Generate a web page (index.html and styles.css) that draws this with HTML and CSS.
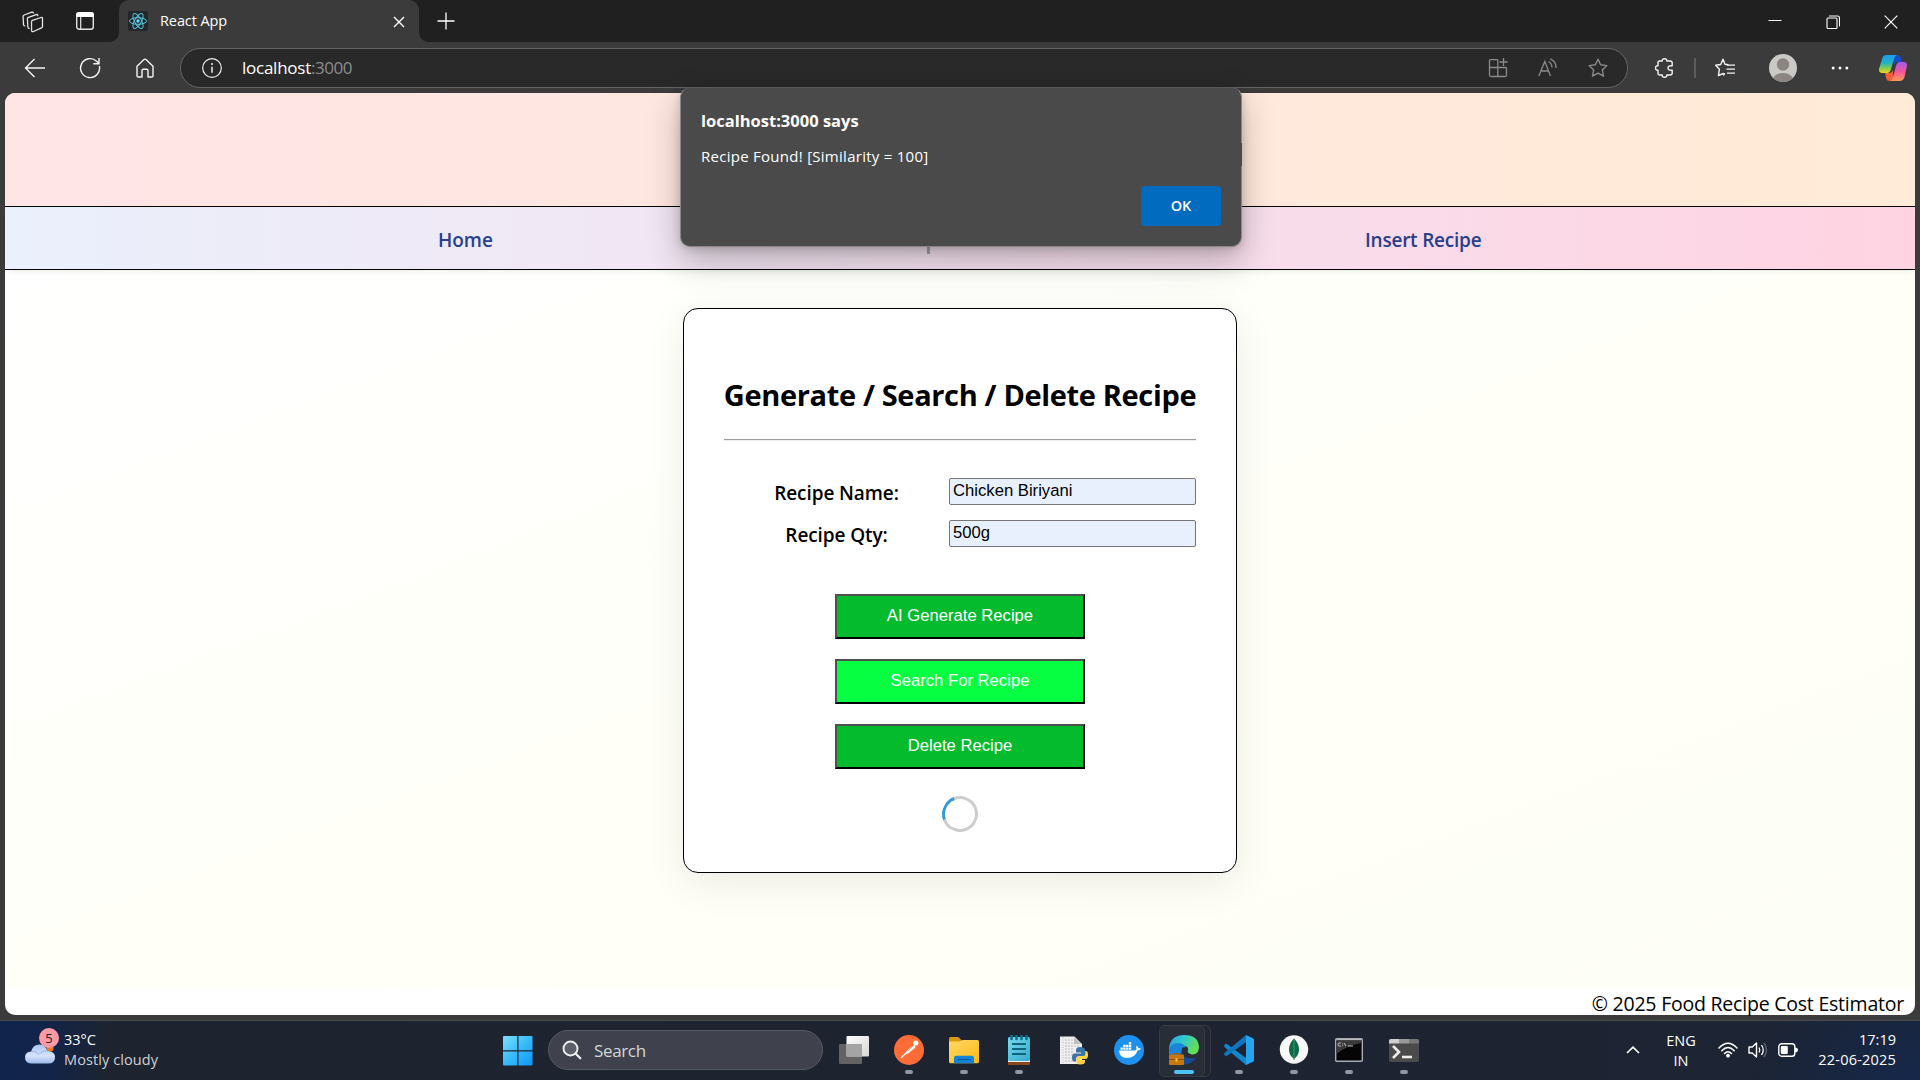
FILE: index.html
```html
<!DOCTYPE html>
<html lang="en">
<head>
<meta charset="utf-8">
<title>React App</title>
<link rel="stylesheet" href="styles.css">
</head>
<body>
<div class="desktop">
  <div class="tabstrip">
    <svg class="ic ws" width="22" height="22" viewBox="0 0 22 22"><g fill="none" stroke="#e4e4e4" stroke-width="1.3" stroke-linejoin="round" stroke-linecap="round"><path d="M10.500 9.400 19 6.500q1.500-.4 1.500 1v8q0 1-1 1.400l-8 3.600q-1.800.7-1.900-1L9.500 11q0-1.200 1-1.600z"/><path d="M15.800 4.500q-.3-1.300-1.600-.9L6.500 6.300q-1.200.4-1.100 1.500l.5 8.500q.1 1.200 1.200 1.200"/><path d="M11.500 1.900Q11 .8 9.800 1.200L2.200 4Q1 4.500 1.100 5.700l.4 8q.1 1.200 1.300 1.200"/></g></svg>
    <svg class="ic ta" width="18" height="18" viewBox="0 0 18 18"><rect x=".7" y=".7" width="16.600" height="16.600" rx="2.500" fill="none" stroke="#e4e4e4" stroke-width="1.400"/><path d="M0 5V3q0-3 3-3h12q3 0 3 3v2z" fill="#fff"/><path d="M4.700 5v12" stroke="#e4e4e4" stroke-width="1.200"/></svg>
    <div class="tab">
      <svg class="favicon" width="20" height="20" viewBox="0 0 20 20"><rect width="20" height="20" rx="2" fill="#22272b"/><g fill="none" stroke="#58c4dc" stroke-width="1"><ellipse cx="10" cy="10" rx="8.500" ry="3.300"/><ellipse cx="10" cy="10" rx="8.500" ry="3.300" transform="rotate(60 10 10)"/><ellipse cx="10" cy="10" rx="8.500" ry="3.300" transform="rotate(120 10 10)"/></g><circle cx="10" cy="10" r="1.700" fill="#61dafb"/></svg>
      <span class="t tab-title">React App</span>
      <svg class="tab-close" width="12" height="12" viewBox="0 0 12 12"><path d="M1 1l10 10M11 1 1 11" stroke="#fff" stroke-width="1.400"/></svg>
    </div>
    <svg class="plus" width="18" height="18" viewBox="0 0 18 18"><path d="M9 .5v17M.5 9h17" stroke="#fff" stroke-width="1.300"/></svg>
    <div class="winbtns">
      <svg width="14" height="14" viewBox="0 0 14 14"><path d="M.5 5.500h13" stroke="#fff"/></svg>
      <svg width="14" height="14" viewBox="0 0 14 14"><g fill="none" stroke="#fff" stroke-width="1.100"><rect x="1" y="3" width="10" height="10.500" rx="1"/><path d="M3 1h8.500q2 0 2 2v8.500"/></g></svg>
      <svg width="14" height="14" viewBox="0 0 14 14"><path d="M.7.7l12.600 12.600M13.300.7.7 13.300" stroke="#fff" stroke-width="1.200"/></svg>
    </div>
  </div>

  <div class="toolbar">
    <div class="navcell"><svg width="22" height="22" viewBox="0 0 22 22"><path d="M21 11H1.500M10.500 2 1.500 11l9 9" fill="none" stroke="#f4f4f4" stroke-width="1.400"/></svg></div>
    <div class="navcell"><svg width="22" height="22" viewBox="0 0 22 22"><path d="M20.400 9.200A9.500 9.500 0 1 1 17.600 4.200L20 6.500M20 1v5.700h-5.700" fill="none" stroke="#f4f4f4" stroke-width="1.400"/></svg></div>
    <div class="navcell"><svg width="22" height="22" viewBox="0 0 22 22"><path d="M3 9.200 10 2.600q1-.9 2 0l7 6.600v9.500q0 1.300-1.300 1.300H14v-6.500q0-1.300-1.300-1.300H9.300Q8 12.200 8 13.500V20H4.300Q3 20 3 18.700z" fill="none" stroke="#f4f4f4" stroke-width="1.400" stroke-linejoin="round"/></svg></div>
    <div class="address">
      <svg class="info" width="20" height="20" viewBox="0 0 20 20"><circle cx="10" cy="10" r="9.300" fill="none" stroke="#f0f0f0" stroke-width="1.200"/><path d="M10 8.800v6" stroke="#f0f0f0" stroke-width="1.500"/><circle cx="10" cy="6" r="1" fill="#f0f0f0"/></svg>
      <div class="url"><span class="t url-host">localhost</span><span class="t url-port">:3000</span></div>
      <div class="addr-icons">
        <svg width="20" height="20" viewBox="0 0 20 20"><g fill="none" stroke="#8a8a8a" stroke-width="1.300"><path d="M9.500 1.700H2.700q-1.200 0-1.200 1.200V17q0 1.500 1.500 1.500h14q1.500 0 1.500-1.500v-6.500q0-1-1-1h-16M9.800 1.500v17M15.500 0v8M11.500 4h8"/></g></svg>
        <svg width="20" height="20" viewBox="0 0 20 20"><g fill="none" stroke="#8a8a8a" stroke-width="1.300"><path d="M.8 18 6.800 3.500 12.500 18M2.800 13h8M10.500 3.500q3.500 2 3.500 6M12.300.8Q18.500 3.500 18 10"/></g></svg>
        <svg width="20" height="20" viewBox="0 0 20 20"><path d="M10 1.200l2.600 5.600 6.200.8-4.500 4.300 1.200 6.200L10 15.100l-5.500 3 1.200-6.200L1.200 7.600l6.200-.8z" fill="none" stroke="#8a8a8a" stroke-width="1.400" stroke-linejoin="round"/></svg>
      </div>
    </div>
    <div class="toolcell ext"><svg width="20" height="20" viewBox="0 0 20 20"><path d="M4 3h3.200q-.1-2.300 2.300-2.300T11.800 3H15q2.200 0 2.200 2v2.800q-4.200-.4-4.200 2.200t4.200 2.200V15q0 2-2.200 2h-3.200q.1 2.300-2.300 2.300T7.200 17H5q-2 0-2-2v-2.800Q.5 12.300.5 10T3 7.800V4z" fill="none" stroke="#f4f4f4" stroke-width="1.400" stroke-linejoin="round"/></svg></div>
    <div class="divider"></div>
    <div class="toolcell fav"><svg width="22" height="20" viewBox="0 0 22 20"><path d="M13.500 6.700 10 6.200 8 1.200 5.700 6.500l-5 .8 3.700 3.900-1 6.300 5.200-2.200M9.500 15 8.500 17.500" transform="translate(1)" fill="none" stroke="#f4f4f4" stroke-width="1.400" stroke-linejoin="round"/><path d="M13 7.200h8M12.500 11.200H21M13 15.200h8" stroke="#f4f4f4" stroke-width="1.300"/></svg></div>
    <div class="toolcell prof"><svg width="28" height="28" viewBox="0 0 28 28"><clipPath id="av"><circle cx="14" cy="14" r="14"/></clipPath><g clip-path="url(#av)"><rect width="28" height="28" fill="#cbc9c6"/><circle cx="14" cy="10.500" r="6.200" fill="#8b8681"/><ellipse cx="14" cy="27" rx="10.500" ry="8" fill="#8b8681"/></g></svg></div>
    <div class="toolcell dots"><svg width="18" height="4" viewBox="0 0 18 4"><circle cx="2.200" cy="2" r="1.500" fill="#fff"/><circle cx="9" cy="2" r="1.500" fill="#fff"/><circle cx="15.800" cy="2" r="1.500" fill="#fff"/></svg></div>
    <div class="toolcell copilot"><svg width="28" height="26" viewBox="0 0 28 26"><defs><linearGradient id="c1" x1="0" y1="0" x2="0" y2="1"><stop offset="0" stop-color="#1b9cf0"/><stop offset=".45" stop-color="#24b3c0"/><stop offset=".8" stop-color="#9fd037"/><stop offset="1" stop-color="#f5d21b"/></linearGradient><linearGradient id="c2" x1="0" y1="0" x2="0" y2="1"><stop offset="0" stop-color="#a55bf0"/><stop offset=".5" stop-color="#f0569a"/><stop offset="1" stop-color="#fb9a55"/></linearGradient></defs><path d="M14 0h4.500q2.500 0 3.300 2.600L23 7h-5q-2 0-3 3z" fill="#1a49c9"/><path d="M14 26H10.500q-2.500 0-3.200-2.600L6 18h5q2 0 3-3z" fill="#f5603b"/><path d="M7.500 0H18q-2 .5-3 4l-3 10q-1 4-4 4H3q-4 0-2.700-5L3 4q1-4 4.500-4z" fill="url(#c1)"/><path d="M20.500 26H11q2-.5 3-4l3-11q1-4 4-4h3.500q4.500 0 3.200 5L25.500 22q-1.200 4-5 4z" fill="url(#c2)"/></svg></div>
  </div>

  <div class="viewport">
    <div class="page">
      <header class="banner"></header>
      <nav class="nav">
        <a class="t nav-home">Home</a>
        <span class="nav-sep"></span>
        <a class="t nav-insert">Insert Recipe</a>
      </nav>
      <main class="content">
        <section class="card">
          <h1 class="card-title"><span class="t title-text">Generate / Search / Delete Recipe</span></h1>
          <div class="rule"></div>
          <form class="form">
            <label class="label"><span class="t label-name">Recipe Name:</span></label>
            <div class="input"><span class="t">Chicken Biriyani</span></div>
            <label class="label"><span class="t label-qty">Recipe Qty:</span></label>
            <div class="input"><span class="t">500g</span></div>
          </form>
          <div class="actions">
            <div class="btn"><span class="t">AI Generate Recipe</span></div>
            <div class="btn btn-active"><span class="t">Search For Recipe</span></div>
            <div class="btn"><span class="t">Delete Recipe</span></div>
          </div>
          <div class="spinner"></div>
        </section>
      </main>
      <footer class="footer"><span class="t footer-text">© 2025 Food Recipe Cost Estimator</span></footer>
    </div>
  </div>

  <div class="taskbar">
    <div class="weather">
      <div class="weather-icon">
        <svg width="30" height="20" viewBox="0 0 30 20"><defs><linearGradient id="cl" x1="0" y1="0" x2="0" y2="1"><stop offset="0" stop-color="#aac8f8"/><stop offset=".6" stop-color="#d5e2fa"/><stop offset="1" stop-color="#9db9ec"/></linearGradient></defs><circle cx="25" cy="4" r="3.500" fill="#f07a1c"/><path d="M7 19.500Q0 19.500 0 13.500 0 8 6 7.500 8 .5 14.500.5q5.500 0 8 6.500Q30 7 30 13.500q0 6-7 6z" fill="url(#cl)"/><path d="M6 7.500q5-1 8 3 3-4 8.500-3.500" fill="none" stroke="#8fb0ea" stroke-width=".8"/></svg>
        <span class="badge">5</span>
      </div>
      <div class="weather-text"><span class="t temp">33°C</span><span class="t cond">Mostly cloudy</span></div>
    </div>
    <div class="dock">
      <svg class="start" width="30" height="30" viewBox="0 0 30 30"><defs><linearGradient id="wn" x1="0" y1="0" x2="1" y2="1"><stop offset="0" stop-color="#7fe0fd"/><stop offset=".5" stop-color="#38bbfb"/><stop offset="1" stop-color="#0c95f8"/></linearGradient></defs><path fill="url(#wn)" d="M1 0h13.300v14.300H0V1q0-1 1-1zM15.500 0H28.500q1 0 1 1v13.300h-14zM0 15.500h14.300v14H1q-1 0-1-1zM15.500 15.500h14v13q0 1-1 1h-13z"/></svg>
      <div class="search"><svg width="20" height="20" viewBox="0 0 20 20"><circle cx="8.500" cy="8.500" r="7" fill="#5d6069" stroke="#eee" stroke-width="1.900"/><path d="M13.500 13.500l4.800 4.800" stroke="#eee" stroke-width="2.300" stroke-linecap="round"/></svg><span class="t search-text">Search</span></div>
      <div class="app"><svg width="30" height="28" viewBox="0 0 30 28"><defs><linearGradient id="tv" x1="0" y1="0" x2="1" y2="1"><stop offset="0" stop-color="#fff"/><stop offset="1" stop-color="#d5d5d5"/></linearGradient></defs><rect y="8" width="23" height="20" rx="1" fill="#636363"/><rect x="7.500" width="22.500" height="20.500" rx="1" fill="url(#tv)"/><rect x="7.500" y="8" width="15.500" height="12.500" fill="#a4a4a4"/></svg></div>
      <div class="app"><svg width="30" height="30" viewBox="0 0 30 30"><circle cx="15" cy="15" r="15" fill="#ff6c37"/><circle cx="21.800" cy="8" r="2.600" fill="#fff"/><path d="M20.500 9.500 13 15.500l-2 4 3-1 7.500-6z" fill="#fff"/><path d="M12.500 17.500 7 23M16 13.500l-2 4" stroke="#fff" stroke-width="1.300"/><path d="M19.500 10.500l-6 6" stroke="#ff6c37" stroke-width=".6"/></svg><i></i></div>
      <div class="app"><svg width="30" height="28" viewBox="0 0 30 28"><defs><linearGradient id="fo" x1="0" y1="0" x2="1" y2="1"><stop offset="0" stop-color="#ffd968"/><stop offset="1" stop-color="#fdb813"/></linearGradient></defs><path d="M0 8V2.500Q0 1 1.500 1H9l4 3.500V8z" fill="#dd9a08"/><path d="M0 5.500h10.500L14 4h14.500Q30 4 30 5.500v20q0 1.800-1.500 1.800h-27Q0 27.300 0 25.500z" fill="url(#fo)"/><path d="M5 27.300V22q0-2.300 2.300-2.300h15.400Q25 19.700 25 22v5.300z" fill="#1384d6"/><path d="M8.500 23.500h13" stroke="#0a5ba3" stroke-width="1.200"/></svg><i></i></div>
      <div class="app"><svg width="22" height="30" viewBox="0 0 22 30"><defs><linearGradient id="np" x1="0" y1="0" x2="1" y2="1"><stop offset="0" stop-color="#75dbee"/><stop offset="1" stop-color="#36aacb"/></linearGradient></defs><rect y="20" width="22" height="10" rx="1" fill="#8a481c"/><path d="M0 24h22v3H0z" fill="#eee"/><rect y="2" width="22" height="24" rx="1.500" fill="url(#np)"/><path d="M4 9h14M4 14h14M4 19h14" stroke="#0b647c" stroke-width="1.900"/><path d="M3.500 0v4M8.500 0v4M13.500 0v4M18.500 0v4" stroke="#0f708b" stroke-width="2.600" stroke-linecap="round"/></svg><i></i></div>
      <div class="app"><svg width="28" height="29" viewBox="0 0 28 29"><path d="M0 .5h14.500L22 8v20H0z" fill="#efefef"/><path d="M3 1v27" stroke="#bbb" stroke-dasharray="1 1.500"/><path d="M5 4h9M5 7h10M5 10h14M5 13h9M5 16h8M5 19h9M5 22h9M5 25h14" stroke="#bbb" stroke-dasharray="2 1"/><path d="M14 1v7h7z" fill="#bdbdbd"/><path d="M20 11q-4 0-4 3v2.500h5v1h-6.500q-2.500 0-2.500 4t2.500 4H16v-2.500q0-2.500 2.500-2.500h4q2.500 0 2.500-2.500v-4Q25 11 20 11z" fill="#3a75a8"/><path d="M25 15h1q2 0 2 4t-2.500 4H20v1h5v1.500q0 3-4.500 3T16.500 26v-3.500q0-2.500 2.500-2.500h4q2.300 0 2.300-2.500z" fill="#ffd241"/></svg></div>
      <div class="app"><svg width="30" height="30" viewBox="0 0 30 30"><circle cx="15" cy="15" r="15" fill="#1d91ed"/><path d="M5 15.500h15.500q2-.2 2-2-1-1.500.3-2.800 1.500 1 1.600 2.500 1.400-.2 2.600.4-.8 1.900-3.400 2-2.500 7.400-10.600 7.400-7.600 0-8-7.500zM6.500 12.500h2.300v2.300H6.500zM9.300 12.500h2.300v2.300H9.300zM12.100 12.500h2.300v2.300h-2.300zM14.900 12.500h2.300v2.300h-2.300zM9.300 9.800h2.300V12H9.300zM12.100 9.800h2.300V12h-2.300zM14.900 9.800h2.300V12h-2.300zM14.900 7h2.300v2.300h-2.300z" fill="#fff"/></svg></div>
      <div class="app app-current"><svg width="30" height="30" viewBox="0 0 30 30"><defs><linearGradient id="e1" x1="0" y1="0" x2="1" y2=".4"><stop offset="0" stop-color="#249fe4"/><stop offset=".5" stop-color="#31c9cc"/><stop offset="1" stop-color="#62df54"/></linearGradient></defs><path d="M30 13Q30 0 15 0 1 0 0 14v5h13q-2-7 2-8 4.500 0 4 4-1.500 3 4 4.500 6 .5 7-6.500z" fill="url(#e1)"/><path d="M0 14Q2 8.500 8.500 8q6 0 8.500 4.500-5-1-5 5L15 27l-2 2.500Q0 28 0 14z" fill="#1c85da"/><path d="M12.500 15q-1 10 14.500 8-5 7-14 6.700-4-6-.5-14.700z" fill="#134c94"/><path d="M4.500 20v-1.500h6V20" fill="none" stroke="#a55b0d" stroke-width="1.200"/><rect y="19.500" width="15" height="10.500" rx="1" fill="#c9760c"/><path d="M0 24.500h15" stroke="#8d4b07"/><rect x="6.500" y="23.500" width="2" height="3" fill="#ffd83b"/></svg><i></i></div>
      <div class="app"><svg width="30" height="30" viewBox="0 0 30 30"><path d="M0 10.500l2.200-2L22 23v7L1 12.500Q0 11.500 0 10.500z" fill="#1486cf"/><path d="M0 19.500l2.200 2L22 7V0L1 17.500q-1 1-1 2z" fill="#0f75bd"/><path d="M22 0l7 3.200q1 .5 1 1.600v20.400q0 1.100-1 1.600L22 30z" fill="#27a4f0"/></svg><i></i></div>
      <div class="app"><svg width="30" height="30" viewBox="0 0 30 30"><circle cx="15" cy="14.500" r="14.200" fill="#f7f8f7"/><path d="M15 3.500q5 5 5 11 0 5.500-4.500 9l-.5 2-.5-2Q10 20 10 14.500q0-6 5-11z" fill="#0a6b45"/><path d="M15 4v21" stroke="#69a58c" stroke-width=".7"/></svg><i></i></div>
      <div class="app"><svg width="28" height="24" viewBox="0 0 28 24"><rect x=".7" y=".7" width="26.600" height="22.600" rx="1" fill="#050505" stroke="#a9adb3" stroke-width="1.400"/><path d="M1.500 1.800h25" stroke="#dfe2e6"/><path d="M1.500 3h25v2Q10 8 1.500 16z" fill="#3a3a3a"/><path d="M6 5H4q-1 0-1 1.500T4 8h2M7.500 5.500v.8M7.500 7.200V8M9 5l2 3M13 8h5" stroke="#d0d0d0" fill="none" stroke-width=".9"/></svg><i></i></div>
      <div class="app"><svg width="30" height="23" viewBox="0 0 30 23"><rect width="30" height="23" rx="1.800" fill="#4b4b4b"/><path d="M0 4.500V2Q0 0 2 0h8v4.500z" fill="#cfcfcf"/><path d="M10 0h10v4.500H10z" fill="#9b9b9b"/><path d="M20 0h8q2 0 2 2v2.500H20z" fill="#777"/><path d="M4 7l6 6-6 6" fill="none" stroke="#ececec" stroke-width="2.600"/><path d="M13 18h10" stroke="#ececec" stroke-width="2.600"/></svg><i></i></div>
    </div>
    <div class="tray">
      <svg class="chev" width="14" height="8" viewBox="0 0 14 8"><path d="M1 7l6-5.800L13 7" fill="none" stroke="#fff" stroke-width="1.700"/></svg>
      <div class="lang"><span class="t eng">ENG</span><span class="t in">IN</span></div>
      <div class="sys">
      <svg width="20" height="16" viewBox="0 0 20 16"><g fill="none" stroke="#fff" stroke-width="1.500" stroke-linecap="round"><path d="M1 6q9-9.500 18 0M3.800 8.800q6.200-6.500 12.400 0M6.500 11.500q3.500-3.600 7 0"/></g><circle cx="10" cy="13.700" r="1.900" fill="#fff"/></svg>
      <svg width="20" height="18" viewBox="0 0 20 18"><path d="M1 6h3.200L8.500 2v14L4.200 12H1z" fill="none" stroke="#fff" stroke-width="1.400" stroke-linejoin="round"/><path d="M11 6.500q1.600 2.500 0 5M13.500 4q3.500 5 0 10" fill="none" stroke="#fff" stroke-width="1.300"/><path d="M16 2q5 7 0 14" fill="none" stroke="#5e6370" stroke-width="1.300"/></svg>
      <svg width="20" height="14" viewBox="0 0 20 14"><rect x=".8" y=".8" width="16" height="12.400" rx="2.800" fill="none" stroke="#fff" stroke-width="1.400"/><rect x="2.800" y="3" width="7" height="8" rx="1" fill="#fff"/><path d="M17 4.500q3 .3 3 2.500t-3 2.500z" fill="#fff"/></svg>
      </div>
      <div class="clock"><span class="t time">17:19</span><span class="t date">22-06-2025</span></div>
    </div>
  </div>

  <div class="dialog">
    <span class="t dlg-title">localhost:3000 says</span>
    <span class="t dlg-msg">Recipe Found! [Similarity = 100]</span>
    <div class="dlg-actions"><div class="ok"><span class="t ok-text">OK</span></div></div>
  </div>
</div>
</body>
</html>
```
FILE: styles.css
```css
* { box-sizing: border-box; }
body { margin: 0; font-family: "Open Sans", "Noto Sans", sans-serif; }
svg { display: block; flex: none; }
.t { white-space: nowrap; }

.desktop { position: relative; width: 1920px; height: 1080px; overflow: hidden; display: flex; flex-direction: column; background: #3b3b3b; }

/* tab strip */
.tabstrip { height: 42px; flex: none; display: flex; align-items: flex-start; background: #202020; }
.ws { margin: 11px 0 0 22px; }
.ta { margin: 12px 0 0 32px; }
.tab { position: relative; width: 300px; height: 42px; margin-left: 25px; padding: 11px 14px 0 9px; display: flex; align-items: flex-start; background: #3b3b3b; border-radius: 10px 10px 0 0; }
.tab::before, .tab::after { content: ""; position: absolute; bottom: 0; width: 9px; height: 9px; }
.tab::before { left: -9px; background: radial-gradient(circle at 0 0, #202020 8.5px, #3b3b3b 9px); }
.tab::after { right: -9px; background: radial-gradient(circle at 100% 0, #202020 8.5px, #3b3b3b 9px); }
.tab-title { margin: 0 auto 0 12px; font-size: 14.5px; line-height: 20px; letter-spacing: -0.1px; color: #fff; }
.tab-close { margin-top: 5px; }
.plus { margin: 12px 0 0 18px; }
.winbtns { display: flex; gap: 44px; margin: 15px 22px 0 auto; }

/* toolbar */
.toolbar { height: 51px; flex: none; display: flex; align-items: center; padding-left: 7px; }
.navcell { width: 55px; display: flex; justify-content: center; }
.address { width: 1448px; height: 40px; margin-left: 8px; padding: 0 19px 0 21px; display: flex; align-items: center; background: #292929; border: 1px solid #656565; border-radius: 20px; }
.url { margin-left: 20px; font-size: 17px; line-height: 24px; color: #fff; }
.url-host { letter-spacing: -0.25px; }
.url-port { color: #8c8c8c; letter-spacing: -0.45px; }
.addr-icons { display: flex; gap: 30px; margin-left: auto; }
.toolcell { width: 54px; display: flex; justify-content: center; }
.ext { margin-left: 10px; }
.divider { width: 2px; height: 20px; margin: 0 2px; background: #5c5c5c; }
.prof { margin-left: 4px; }
.dots { margin-left: 3px; }
.copilot { margin-left: -1px; }

/* web page */
.viewport { height: 928px; flex: none; padding: 0 5px 5px; border-bottom: 1px solid #4a4b4c; }
.page { height: 922px; display: flex; flex-direction: column; background: #fff; border-radius: 10px; }
.banner { height: 113px; flex: none; border-radius: 10px 10px 0 0; background: linear-gradient(to right, #ffe5e6, #ffebd7); }
.nav { position: relative; height: 64px; flex: none; display: flex; align-items: center; border: solid #000; border-width: 1px 0; background: linear-gradient(to right, #eaf0fc, #ffd3e2); color: #27408b; font-size: 19px; font-weight: 600; box-shadow: 0 5px 8px -4px rgba(0,0,0,.08); }
.nav-home { margin-left: 433px; padding-top: 4px; }
.nav-sep { width: 3px; height: 30px; margin: 2px 0 0 434px; background: #9ca3af; }
.nav-insert { margin-left: 435px; padding-top: 4px; letter-spacing: -0.22px; }
.content { flex: 1; display: flex; justify-content: center; align-items: flex-start; padding-top: 38px; background: linear-gradient(to bottom right, #fff, #fffff7 60%, #fdfef5); }
.card { width: 554px; height: 565px; padding: 0 40px; background: #fff; border: 1px solid #000; border-radius: 15px; box-shadow: 0 10px 40px rgba(0,0,0,.08); display: flex; flex-direction: column; align-items: center; }
.card-title { margin: 64px 0 0; font-size: 29px; line-height: 44px; font-weight: 700; letter-spacing: -0.35px; display: flex; }
.rule { width: 472px; height: 2px; margin-top: 22px; background: #9a9a9a; border-bottom: 1px solid #eee; }
.form { width: 472px; margin-top: 37px; display: grid; grid-template-columns: 225px 247px; row-gap: 15px; }
.label { height: 27px; padding-top: 2px; display: flex; justify-content: center; align-items: center; font-size: 19px; font-weight: 600; letter-spacing: -0.1px; }
.input { height: 27px; padding: 0 3px; border: 1px solid #767676; border-radius: 2px; background: #e8f0fe; font: 16.67px/23px "Liberation Sans", Arial, sans-serif; }
.actions { display: flex; flex-direction: column; gap: 20px; margin-top: 47px; }
.btn { width: 250px; height: 45px; border: 2px solid; border-color: #4f4f4f #000 #000 #4f4f4f; background: #03bb2c; color: #fff; text-align: center; font: 16.67px/40px "Liberation Sans", Arial, sans-serif; }
.btn-active { background: #06ff40; }
.spinner { width: 36px; height: 36px; margin-top: 27px; border: 3px solid #ccc; border-top-color: #3498db; border-radius: 50%; transform: rotate(-65deg); }
.footer { height: 27px; flex: none; padding-right: 11px; text-align: right; font-size: 19.5px; line-height: 31px; letter-spacing: -0.22px; }

/* taskbar */
.taskbar { position: relative; height: 59px; flex: none; background: radial-gradient(circle at 1920px 90px, #14284e 0, rgba(20,40,78,0) 180px), linear-gradient(to right, #11244c 0, #13244a 50px, #1e242f 110px, #1e2330 50%, #1d2433 100%); color: #fff; font-size: 14.5px; display: flex; }
.weather { width: 503px; display: flex; padding: 4px 0 0 25px; }
.weather-icon { position: relative; width: 30px; padding-top: 19px; }
.badge { position: absolute; left: 14px; top: 3px; width: 20px; height: 20px; border-radius: 50%; background: #ff99a4; color: #222; font-size: 13px; line-height: 20px; text-align: center; }
.weather-text { margin: 5px 0 0 9px; display: flex; flex-direction: column; line-height: 20px; }
.cond { color: #cfd1d5; letter-spacing: 0.1px; }
.dock { display: flex; align-items: flex-start; }
.start { margin-top: 15px; }
.search { width: 275px; height: 40px; margin: 9px 3px 0 15px; padding-left: 13px; display: flex; align-items: center; border: 1px solid #565962; border-radius: 20px; background: #3f424c; font-size: 17px; color: #d5d6d8; }
.search-text { margin-left: 12px; letter-spacing: -0.35px; }
.app { position: relative; width: 55px; height: 59px; display: flex; justify-content: center; align-items: center; padding-bottom: 1px; }
.app i { position: absolute; left: 24px; bottom: 6px; width: 8px; height: 4px; border-radius: 2px; background: #9296a0; }
.app-current::before, .app-current::after { content: ""; position: absolute; top: 4px; height: 50px; border: 1px solid #373b46; border-radius: 6px; background: #292d38; }
.app-current::after { left: 6px; width: 47px; z-index: 0; background: #222631; }
.app-current::before { left: 3px; width: 44px; z-index: 1; }
.app-current svg { position: relative; z-index: 2; }
.app-current i { left: 18px; width: 20px; background: #4cc2ff; z-index: 2; }
.tray { margin-left: auto; display: flex; padding-right: 24px; }
.chev { margin-top: 25px; }
.lang { width: 56px; margin-left: 13px; display: flex; flex-direction: column; align-items: center; padding-top: 10px; line-height: 20px; }
.sys { display: flex; gap: 10px; align-items: center; height: 57px; margin-left: 9px; }
.clock { width: 98px; display: flex; flex-direction: column; align-items: flex-end; padding-top: 9px; line-height: 20px; }
.date { letter-spacing: 0.2px; }

/* alert box floating over the page */
.dialog { position: absolute; left: 680px; top: 87px; width: 562px; height: 160px; padding: 21px 20px 20px; display: flex; flex-direction: column; background: #4a4a4a; border: 1px solid #8b8588; border-top-color: #5a5a5a; border-radius: 10px; color: #fff; box-shadow: 0 14px 34px rgba(0,0,0,.26), 0 2px 10px rgba(0,0,0,.16); }
.dialog::after { content: ""; position: absolute; right: -1px; top: 55px; width: 1px; height: 23px; background: #4a4a4a; }
.dlg-title { font-size: 16.5px; font-weight: 700; line-height: 23px; }
.dlg-msg { font-size: 15px; line-height: 20px; margin-top: 14px; letter-spacing: 0.27px; }
.dlg-actions { display: flex; justify-content: flex-end; margin: 20px 0 0; }
.ok { width: 80px; height: 40px; padding-bottom: 2px; border-radius: 4px; background: #006bbf; display: flex; align-items: center; justify-content: center; font-size: 14.5px; font-weight: 600; }
```
